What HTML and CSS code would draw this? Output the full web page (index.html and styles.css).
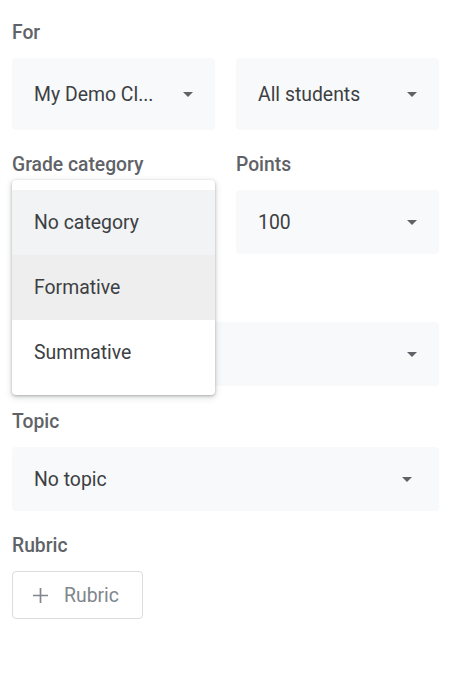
FILE: index.html
```html
<!DOCTYPE html>
<html>
<head>
<meta charset="utf-8">
<link rel="stylesheet" href="styles.css">
</head>
<body>
<div class="panel">
  <section class="field">
    <div class="label">For</div>
    <div class="row">
      <div class="select tall"><span class="value">My Demo Cl...</span><svg class="arrow" viewBox="0 0 10 5"><path d="M0 0h10L5 5z"/></svg></div>
      <div class="select tall"><span class="value">All students</span><svg class="arrow" viewBox="0 0 10 5"><path d="M0 0h10L5 5z"/></svg></div>
    </div>
  </section>
  <section class="field">
    <div class="row">
      <div class="col">
        <div class="label">Grade category</div>
        <div class="anchor">
          <div class="select"><span class="value hidden-value">No category</span><svg class="arrow" viewBox="0 0 10 5"><path d="M0 0h10L5 5z"/></svg></div>
          <div class="menu">
            <div class="item selected">No category</div>
            <div class="item hover">Formative</div>
            <div class="item">Summative</div>
          </div>
        </div>
      </div>
      <div class="col">
        <div class="label">Points</div>
        <div class="select"><span class="value">100</span><svg class="arrow" viewBox="0 0 10 5"><path d="M0 0h10L5 5z"/></svg></div>
      </div>
    </div>
  </section>
  <section class="field due">
    <div class="label hidden-value">Due</div>
    <div class="select"><span class="value hidden-value">No due date</span><svg class="arrow" viewBox="0 0 10 5"><path d="M0 0h10L5 5z"/></svg></div>
  </section>
  <section class="field topic">
    <div class="label">Topic</div>
    <div class="select wide"><span class="value">No topic</span><svg class="arrow" viewBox="0 0 10 5"><path d="M0 0h10L5 5z"/></svg></div>
  </section>
  <section class="field">
    <div class="label">Rubric</div>
    <div><button class="add-btn"><svg class="plus" viewBox="0 0 16 16"><path d="M8 0v16M0 8h16" stroke="currentColor" stroke-width="1.8" fill="none"/></svg><span>Rubric</span></button></div>
  </section>
</div>
</body>
</html>
```

FILE: styles.css
```css
* { box-sizing: border-box; }
html, body { margin: 0; padding: 0; background: #fff; }
body {
  font-family: Roboto, "Liberation Sans", Arial, sans-serif;
  color: #3c4043;
}
.panel {
  width: 439px;
  padding: 21px 0 0 12px;
  display: flex;
  flex-direction: column;
  gap: 23px;
}
.field { display: flex; flex-direction: column; gap: 13px; }
.field.due { margin-top: 8px; }
.field.topic { margin-top: 1px; }
.label {
  font-size: 19.3px;
  font-weight: 500;
  line-height: 24px;
  color: #5f6368;
}
.row {
  display: grid;
  grid-template-columns: 203px 203px;
  column-gap: 21px;
}
.col { display: flex; flex-direction: column; gap: 13px; }
.anchor { position: relative; }
.hidden-value { visibility: hidden; }
.select {
  height: 64px;
  background: #f8f9fa;
  border-radius: 4px;
  display: flex;
  align-items: center;
  justify-content: space-between;
  padding: 0 22px;
  font-size: 19.4px;
  color: #3c4043;
}
.select.tall { height: 72px; }
.select.wide { padding-right: 27px; }
.arrow { width: 10px; height: 5px; fill: #5f6368; flex: none; }
.menu {
  position: absolute;
  left: 0;
  top: -10px;
  width: 203px;
  background: #fff;
  border-radius: 4px;
  padding: 10px 0;
  box-shadow: 0 1px 3px rgba(60,64,67,0.35), 0 2px 6px 1px rgba(60,64,67,0.15);
  z-index: 2;
}
.item {
  height: 65px;
  display: flex;
  align-items: center;
  padding: 0 22px;
  font-size: 19.4px;
  color: #3c4043;
}
.item.selected { background: #f1f3f4; }
.item.hover { background: #eeeeee; }
.add-btn {
  height: 48px;
  width: 131px;
  border: 1px solid #dadce0;
  border-radius: 4px;
  background: #fff;
  display: flex;
  align-items: center;
  gap: 16px;
  padding: 0 0 0 20px;
  font-family: inherit;
  font-size: 19.4px;
  color: #80868b;
}
.plus { width: 15px; height: 15px; color: #80868b; flex: none; }
```
